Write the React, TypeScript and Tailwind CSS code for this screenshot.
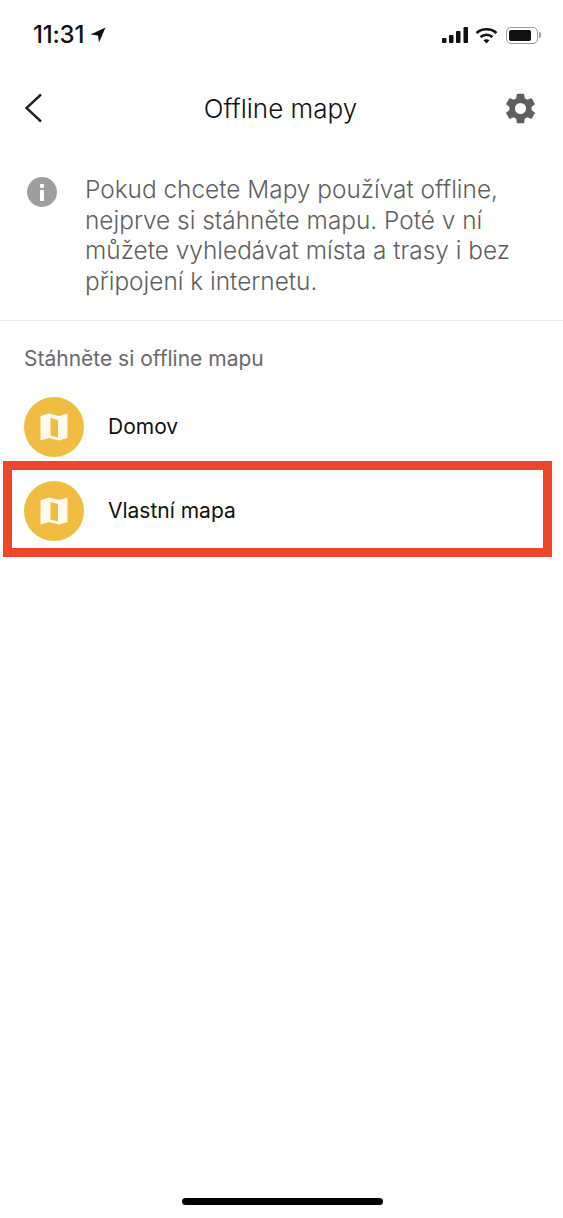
import React from 'react';

function MapBadge() {
  return (
    <div className="w-[60px] h-[60px] rounded-full bg-[#f1bc42] flex items-center justify-center shrink-0">
      <svg width="28" height="28" viewBox="0 0 28 28" fill="none">
        <path
          fillRule="evenodd"
          clipRule="evenodd"
          fill="#fef9ec"
          d="M0.5 3 L9 0.5 L19 3 L27.5 0.5 L27.5 25 L19 27.5 L9 25 L0.5 27.5 Z M10.5 5 L10.5 22.5 L18 24.5 L18 7 Z"
        />
      </svg>
    </div>
  );
}

function Row({ label }: { label: string }) {
  return (
    <div className="flex items-center h-[84px] pl-6">
      <MapBadge />
      <span className="ml-6 text-[21px] text-[#111]">{label}</span>
    </div>
  );
}

export default function App() {
  return (
    <div className="relative w-[563px] h-[1218px] bg-white overflow-hidden font-['Inter','Liberation_Sans',sans-serif]">
      {/* status bar */}
      <div className="flex items-center justify-between h-[70px] pl-[33px] pr-[22px]">
        <div className="flex items-center gap-[6px]">
          <span className="text-[24px] font-medium text-[#111] tracking-[-0.2px]">11:31</span>
          <svg width="16" height="16" viewBox="0 0 16 16">
            <path d="M15.5 0.5 L0.5 7.5 L8 8.5 L9 15.5 Z" fill="#111" />
          </svg>
        </div>
        <div className="flex items-center gap-[7px]">
          <svg width="26" height="16" viewBox="0 0 26 16" fill="#111">
            <rect x="0" y="11" width="4.5" height="5" rx="1" />
            <rect x="7" y="8" width="4.5" height="8" rx="1" />
            <rect x="14" y="4" width="4.5" height="12" rx="1" />
            <rect x="21.5" y="0" width="4.5" height="16" rx="1" />
          </svg>
          <svg width="23" height="17" viewBox="0 0 23 17" fill="none" stroke="#111" strokeWidth="2.6">
            <path d="M1.5 6 C7 1 16 1 21.5 6" />
            <path d="M5.5 10 C9 7 14 7 17.5 10" />
            <path d="M11.5 16.5 L8.5 13.2 C10 11.8 13 11.8 14.5 13.2 Z" fill="#111" stroke="none" />
          </svg>
          <div className="flex items-center">
            <div className="w-[32px] h-[17px] rounded-[5px] border border-[#999] p-[2px] ml-[1px]">
              <div className="w-[22px] h-full rounded-[2px] bg-[#111]" />
            </div>
            <div className="w-[2px] h-[6px] ml-[1px] rounded-r-sm bg-[#999]" />
          </div>
        </div>
      </div>

      {/* header */}
      <div className="flex items-center justify-between h-[76px] pl-[22px] pr-[24px]">
        <div className="w-[48px]">
          <svg width="22" height="30" viewBox="0 0 22 30" fill="none" stroke="#222" strokeWidth="2.4">
            <path d="M19 1.5 L4.5 15 L19 28.5" />
          </svg>
        </div>
        <span className="text-[26px] font-light text-[#111]">Offline mapy</span>
        <div className="w-[48px] flex justify-end">
          <svg width="37" height="37" viewBox="0 0 24 24" fill="#5f5f5f">
            <path d="M19.14 12.94c.04-.3.06-.61.06-.94s-.02-.64-.07-.94l2.03-1.58a.49.49 0 0 0 .12-.61l-1.92-3.32a.49.49 0 0 0-.59-.22l-2.39.96a7 7 0 0 0-1.62-.94l-.36-2.54a.48.48 0 0 0-.48-.41h-3.84a.48.48 0 0 0-.47.41l-.36 2.54c-.59.24-1.13.57-1.62.94l-2.39-.96a.48.48 0 0 0-.59.22L2.73 8.87a.48.48 0 0 0 .12.61l2.03 1.58c-.05.3-.08.63-.08.94s.02.64.07.94l-2.03 1.58a.49.49 0 0 0-.12.61l1.92 3.32c.12.22.37.29.59.22l2.39-.96c.5.38 1.03.7 1.62.94l.36 2.54c.05.24.24.41.48.41h3.84c.24 0 .44-.17.47-.41l.36-2.54c.59-.24 1.13-.56 1.62-.94l2.39.96c.22.08.47 0 .59-.22l1.92-3.32a.48.48 0 0 0-.12-.61l-2.01-1.58zM12 15.6a3.6 3.6 0 1 1 0-7.2 3.6 3.6 0 0 1 0 7.2z" />
          </svg>
        </div>
      </div>

      {/* info */}
      <div className="flex items-start pl-[27px] pr-4 pt-[28px] pb-[23px] border-b border-[#ececec]">
        <svg width="30" height="30" viewBox="0 0 30 30" className="shrink-0 mt-[3px]">
          <circle cx="15" cy="15" r="15" fill="#9e9e9e" />
          <rect x="13" y="7" width="4" height="4" rx="1" fill="#fff" />
          <rect x="13" y="13" width="4" height="11" rx="0.5" fill="#fff" />
        </svg>
        <p className="ml-[28px] text-[24.4px] leading-[30.7px] font-light text-[#5f5f5f] whitespace-nowrap">
          Pokud chcete Mapy používat offline,
          <br />
          nejprve si stáhněte mapu. Poté v ní
          <br />
          můžete vyhledávat místa a trasy i bez
          <br />
          připojení k internetu.
        </p>
      </div>

      <div className="pl-6 pt-[26px] pb-[14px] text-[21px] leading-[24px] text-[#6a6a6a]">
        Stáhněte si offline mapu
      </div>

      <Row label="Domov" />
      <Row label="Vlastní mapa" />

      {/* annotation drawn over the row */}
      <div className="absolute left-[3px] top-[461px] w-[549px] h-[96px] border-[9px] border-[#ee462a]" />

      {/* home indicator */}
      <div className="absolute left-[182px] bottom-[13px] w-[201px] h-[7px] rounded-full bg-black" />
    </div>
  );
}
